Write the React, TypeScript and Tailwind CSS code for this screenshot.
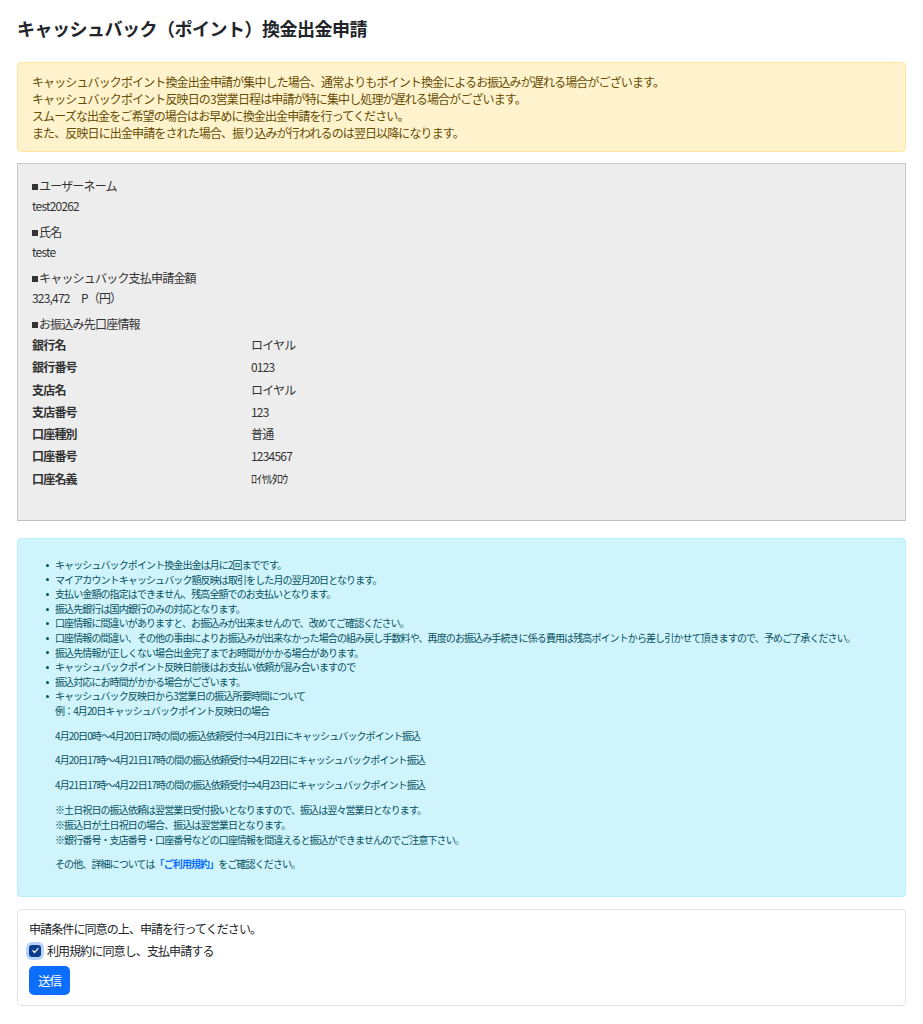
const rows: [string, string][] = [
  ["銀行名", "ロイヤル"],
  ["銀行番号", "0123"],
  ["支店名", "ロイヤル"],
  ["支店番号", "123"],
  ["口座種別", "普通"],
  ["口座番号", "1234567"],
  ["口座名義", "ﾛｲﾔﾙﾀﾛｳ"],
];

const notes = [
  "キャッシュバックポイント換金出金は月に2回までです。",
  "マイアカウントキャッシュバック額反映は取引をした月の翌月20日となります。",
  "支払い金額の指定はできません、残高全額でのお支払いとなります。",
  "振込先銀行は国内銀行のみの対応となります。",
  "口座情報に間違いがありますと、お振込みが出来ませんので、改めてご確認ください。",
  "口座情報の間違い、その他の事由によりお振込みが出来なかった場合の組み戻し手数料や、再度のお振込み手続きに係る費用は残高ポイントから差し引かせて頂きますので、予めご了承ください。",
  "振込先情報が正しくない場合出金完了までお時間がかかる場合があります。",
  "キャッシュバックポイント反映日前後はお支払い依頼が混み合いますので",
  "振込対応にお時間がかかる場合がございます。",
];

function Note({ children }: { children: React.ReactNode }) {
  return (
    <li className="flex">
      <span className="flex h-[14.6px] w-[9px] shrink-0 items-center">
        <span className="h-[3px] w-[3px] rounded-full bg-[#055160]" />
      </span>
      <div>{children}</div>
    </li>
  );
}

function Label({ children }: { children: React.ReactNode }) {
  return (
    <p>
      <span className="mr-[1px] inline-block h-[6px] w-[6px] bg-[#333] align-[1px]" />
      {children}
    </p>
  );
}

export default function App() {
  return (
    <div
      className="min-h-screen bg-white px-[17px] pt-[17px] pb-4 text-[#212529]"
      style={{ fontFamily: '"Noto Sans CJK JP", "Noto Sans", sans-serif' }}
    >
      <h1 className="text-[18px] font-bold leading-[22px] tracking-[-0.5px] text-[#212529]">
        キャッシュバック（ポイント）換金出金申請
      </h1>

      <div className="mt-[23px] rounded border border-[#ffe69c] bg-[#fff3cd] px-[14px] py-[10px] text-[12px] leading-[17px] tracking-[-0.88px] text-[#664d03]">
        <p>キャッシュバックポイント換金出金申請が集中した場合、通常よりもポイント換金によるお振込みが遅れる場合がございます。</p>
        <p>キャッシュバックポイント反映日の3営業日程は申請が特に集中し処理が遅れる場合がございます。</p>
        <p>スムーズな出金をご希望の場合はお早めに換金出金申請を行ってください。</p>
        <p>また、反映日に出金申請をされた場合、振り込みが行われるのは翌日以降になります。</p>
      </div>

      <div className="mt-[11px] border border-[#c8c8c8] border-b-[#bdbdbd] bg-[#ededed] px-[14px] pt-[12px] pb-[30px] text-[12px] leading-[20px] tracking-[-0.8px] text-[#333]">
        <div className="mb-[6px]">
          <Label>ユーザーネーム</Label>
          <p>test20262</p>
        </div>
        <div className="mb-[6px]">
          <Label>氏名</Label>
          <p>teste</p>
        </div>
        <div className="mb-[6px]">
          <Label>キャッシュバック支払申請金額</Label>
          <p>323,472　P（円）</p>
        </div>
        <Label>お振込み先口座情報</Label>
        <div className="grid grid-cols-[219px_1fr]">
          {rows.map(([k, v]) => (
            <div key={k} className="contents">
              <div className="h-[22.3px] font-bold leading-[22px]">{k}</div>
              <div className="h-[22.3px] leading-[22px]">{v}</div>
            </div>
          ))}
        </div>
      </div>

      <div className="mt-[17px] rounded border border-[#b6effb] bg-[#cff4fc] pl-[28px] pr-4 pt-[19px] pb-[24px] text-[10px] leading-[14.6px] tracking-[-0.9px] text-[#055160]">
        <ul>
          {notes.map((n) => (
            <Note key={n}>{n}</Note>
          ))}
          <Note>
            <p>キャッシュバック反映日から3営業日の振込所要時間について</p>
            <p>例：4月20日キャッシュバックポイント反映日の場合</p>
            <p className="mt-[10px]">4月20日0時～4月20日17時の間の振込依頼受付⇒4月21日にキャッシュバックポイント振込</p>
            <p className="mt-[10px]">4月20日17時～4月21日17時の間の振込依頼受付⇒4月22日にキャッシュバックポイント振込</p>
            <p className="mt-[10px]">4月21日17時～4月22日17時の間の振込依頼受付⇒4月23日にキャッシュバックポイント振込</p>
            <p className="mt-[11px]">※土日祝日の振込依頼は翌営業日受付扱いとなりますので、振込は翌々営業日となります。</p>
            <p>※振込日が土日祝日の場合、振込は翌営業日となります。</p>
            <p>※銀行番号・支店番号・口座番号などの口座情報を間違えると振込ができませんのでご注意下さい。</p>
            <p className="mt-[10px]">
              その他、詳細については
              <a href="#" className="font-bold text-[#0d6efd]">
                「ご利用規約」
              </a>
              をご確認ください。
            </p>
          </Note>
        </ul>
      </div>

      <div className="mt-[12px] rounded border border-[#e3e3e3] bg-white px-[11px] pt-[10px] pb-[10px] text-[12px] leading-[18px] tracking-[-0.9px] text-[#212529]">
        <p>申請条件に同意の上、申請を行ってください。</p>
        <label className="mt-[4px] flex items-center gap-[6px]">
          <span className="flex h-[12px] w-[12px] items-center justify-center rounded-[3px] bg-[#0b3d8c] ring-[3px] ring-[#b7d2fb]">
            <svg viewBox="0 0 16 16" className="h-[9px] w-[9px]" fill="none">
              <path d="M3.5 8.5l3 3 6-7" stroke="white" strokeWidth="2.2" strokeLinecap="round" strokeLinejoin="round" />
            </svg>
          </span>
          <span>利用規約に同意し、支払申請する</span>
        </label>
        <button className="mt-[6px] rounded-[5px] bg-[#0d6efd] px-[9px] py-[6px] text-[12.5px] leading-[17px] text-white">
          送信
        </button>
      </div>
    </div>
  );
}
